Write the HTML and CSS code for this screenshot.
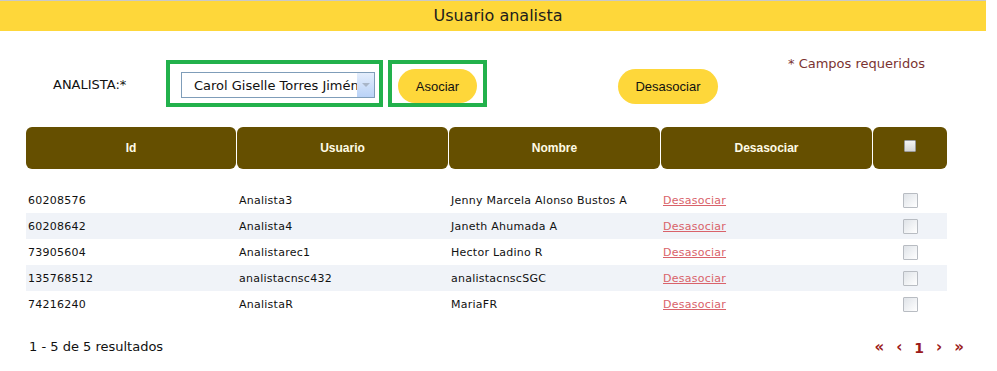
FILE: index.html
```html
<!DOCTYPE html>
<html lang="es">
  <head>
    <meta charset="UTF-8" />
    <title>Usuario analista</title>
    <link rel="stylesheet" href="styles.css">
  </head>
  <body>
    <div class="page">
      <div class="title-bar">Usuario analista</div>

      <div class="form-row">
        <label class="field-label" for="analista">ANALISTA:*</label>
        <div class="highlight">
          <div class="select-box" id="analista">
            <span class="select-text">Carol Giselle Torres Jiménez</span>
            <span class="select-arrow"></span>
          </div>
        </div>
        <div class="highlight highlight-btn">
          <button class="pill-btn btn-asociar">Asociar</button>
        </div>
        <button class="pill-btn btn-desasociar">Desasociar</button>
        <p class="required-note">* Campos requeridos</p>
      </div>

      <div class="grid-table">
        <div class="grid-head">
          <div class="th">Id</div>
          <div class="th">Usuario</div>
          <div class="th">Nombre</div>
          <div class="th">Desasociar</div>
          <div class="th"><span class="chk chk-head"></span></div>
        </div>

        <div class="grid-row">
          <div class="td">60208576</div>
          <div class="td">Analista3</div>
          <div class="td">Jenny Marcela Alonso Bustos A</div>
          <div class="td"><a href="#" class="unlink">Desasociar</a></div>
          <div class="td td-chk"><span class="chk"></span></div>
        </div>
        <div class="grid-row alt">
          <div class="td">60208642</div>
          <div class="td">Analista4</div>
          <div class="td">Janeth Ahumada A</div>
          <div class="td"><a href="#" class="unlink">Desasociar</a></div>
          <div class="td td-chk"><span class="chk"></span></div>
        </div>
        <div class="grid-row">
          <div class="td">73905604</div>
          <div class="td">Analistarec1</div>
          <div class="td">Hector Ladino R</div>
          <div class="td"><a href="#" class="unlink">Desasociar</a></div>
          <div class="td td-chk"><span class="chk"></span></div>
        </div>
        <div class="grid-row alt">
          <div class="td">135768512</div>
          <div class="td">analistacnsc432</div>
          <div class="td">analistacnscSGC</div>
          <div class="td"><a href="#" class="unlink">Desasociar</a></div>
          <div class="td td-chk"><span class="chk"></span></div>
        </div>
        <div class="grid-row">
          <div class="td">74216240</div>
          <div class="td">AnalistaR</div>
          <div class="td">MariaFR</div>
          <div class="td"><a href="#" class="unlink">Desasociar</a></div>
          <div class="td td-chk"><span class="chk"></span></div>
        </div>
      </div>

      <div class="footer">
        <span class="results">1 - 5 de 5 resultados</span>
        <div class="pager">
          <a href="#" class="pg">&laquo;</a>
          <a href="#" class="pg">&lsaquo;</a>
          <span class="pg pg-current">1</span>
          <a href="#" class="pg">&rsaquo;</a>
          <a href="#" class="pg">&raquo;</a>
        </div>
      </div>
    </div>
  </body>
</html>
```

FILE: styles.css
```css
* {
  box-sizing: border-box;
  margin: 0;
  padding: 0;
}

body {
  background: #ffffff;
  font-family: "DejaVu Sans", Verdana, sans-serif;
  color: #111111;
}

.page {
  width: 986px;
  border-top: 1px solid #c8c8c8;
}

.title-bar {
  height: 30px;
  background: #fed73a;
  color: #1c1c1c;
  font-size: 16px;
  line-height: 30px;
  text-align: center;
  padding-left: 10px;
}

/* form row */
.form-row {
  display: flex;
  align-items: center;
  height: 47px;
  margin-top: 29px;
  position: relative;
}

.field-label {
  font-size: 13px;
  margin-left: 53px;
  width: 113px;
  margin-top: 2px;
}

.highlight {
  border: 4px solid #22b14c;
  height: 47px;
  width: 217px;
  display: flex;
  align-items: flex-end;
  padding-left: 11px;
  padding-bottom: 5px;
}

.highlight-btn {
  width: 99px;
  margin-left: 5px;
  padding-left: 6px;
  padding-bottom: 0;
}

.select-box {
  width: 194px;
  height: 26px;
  border: 1px solid #7f9db9;
  display: flex;
  align-items: center;
  padding-left: 12px;
  background: #fff;
}

.select-text {
  flex: 1;
  font-size: 13px;
  white-space: nowrap;
  overflow: hidden;
  padding-top: 1px;
}

.select-arrow {
  width: 17px;
  height: 24px;
  background: linear-gradient(to bottom, #e4eefc, #b9d2f7);
  position: relative;
}

.select-arrow::after {
  content: "";
  position: absolute;
  left: 5px;
  top: 10px;
  border-left: 4px solid transparent;
  border-right: 4px solid transparent;
  border-top: 4px solid #a9b6c8;
}

.pill-btn {
  background: #fed73a;
  border: none;
  border-radius: 18px;
  font-family: "Liberation Sans", Arial, sans-serif;
  font-size: 13px;
  color: #111;
  cursor: pointer;
}

.btn-asociar {
  width: 79px;
  height: 34px;
}

.btn-desasociar {
  width: 100px;
  height: 35px;
  margin-left: 131px;
  margin-top: 6px;
}

.required-note {
  position: absolute;
  left: 788px;
  top: -4px;
  font-size: 13px;
  color: #7b3331;
}

/* table */
.grid-table {
  margin-left: 26px;
  margin-top: 20px;
  width: 921px;
}

.grid-head {
  display: grid;
  grid-template-columns: 210px 211px 211px 211px 74px;
  column-gap: 1px;
  height: 42px;
  margin-bottom: 18px;
}

.th {
  background: #654f00;
  border-radius: 6px;
  color: #fffbe6;
  font-family: "Liberation Sans", Arial, sans-serif;
  font-weight: bold;
  font-size: 12px;
  display: flex;
  align-items: center;
  justify-content: center;
}

.grid-row {
  display: grid;
  grid-template-columns: 211px 212px 212px 212px 74px;
  height: 26px;
  align-items: center;
}

.grid-row.alt {
  background: #f0f3f8;
}

.td {
  font-size: 11px;
  letter-spacing: 0.25px;
  padding-left: 2px;
  white-space: nowrap;
}

.td-chk {
  display: flex;
  justify-content: center;
  padding-left: 0;
}

.unlink {
  color: #d9626a;
  text-decoration: underline;
}

.chk {
  display: inline-block;
  width: 15px;
  height: 15px;
  border: 1px solid #b8bcc2;
  border-radius: 1px;
  background: linear-gradient(135deg, #dfe3e8, #ffffff);
}

.chk-head {
  width: 12px;
  height: 12px;
  border-color: #9a9a9a;
  background: linear-gradient(to bottom, #f4f4f4, #d6d6d6);
  margin-top: -4px;
}

/* footer */
.footer {
  display: flex;
  justify-content: space-between;
  align-items: center;
  margin-top: 20px;
  padding-left: 29px;
  padding-right: 22px;
}

.results {
  font-size: 13px;
}

.pager {
  display: flex;
  align-items: center;
  gap: 12px;
}

.pg {
  color: #9b1b1b;
  font-weight: bold;
  font-size: 15px;
  text-decoration: none;
  font-family: "DejaVu Sans", sans-serif;
}

.pg-current {
  font-size: 14px;
  margin-top: 3px;
}
```
